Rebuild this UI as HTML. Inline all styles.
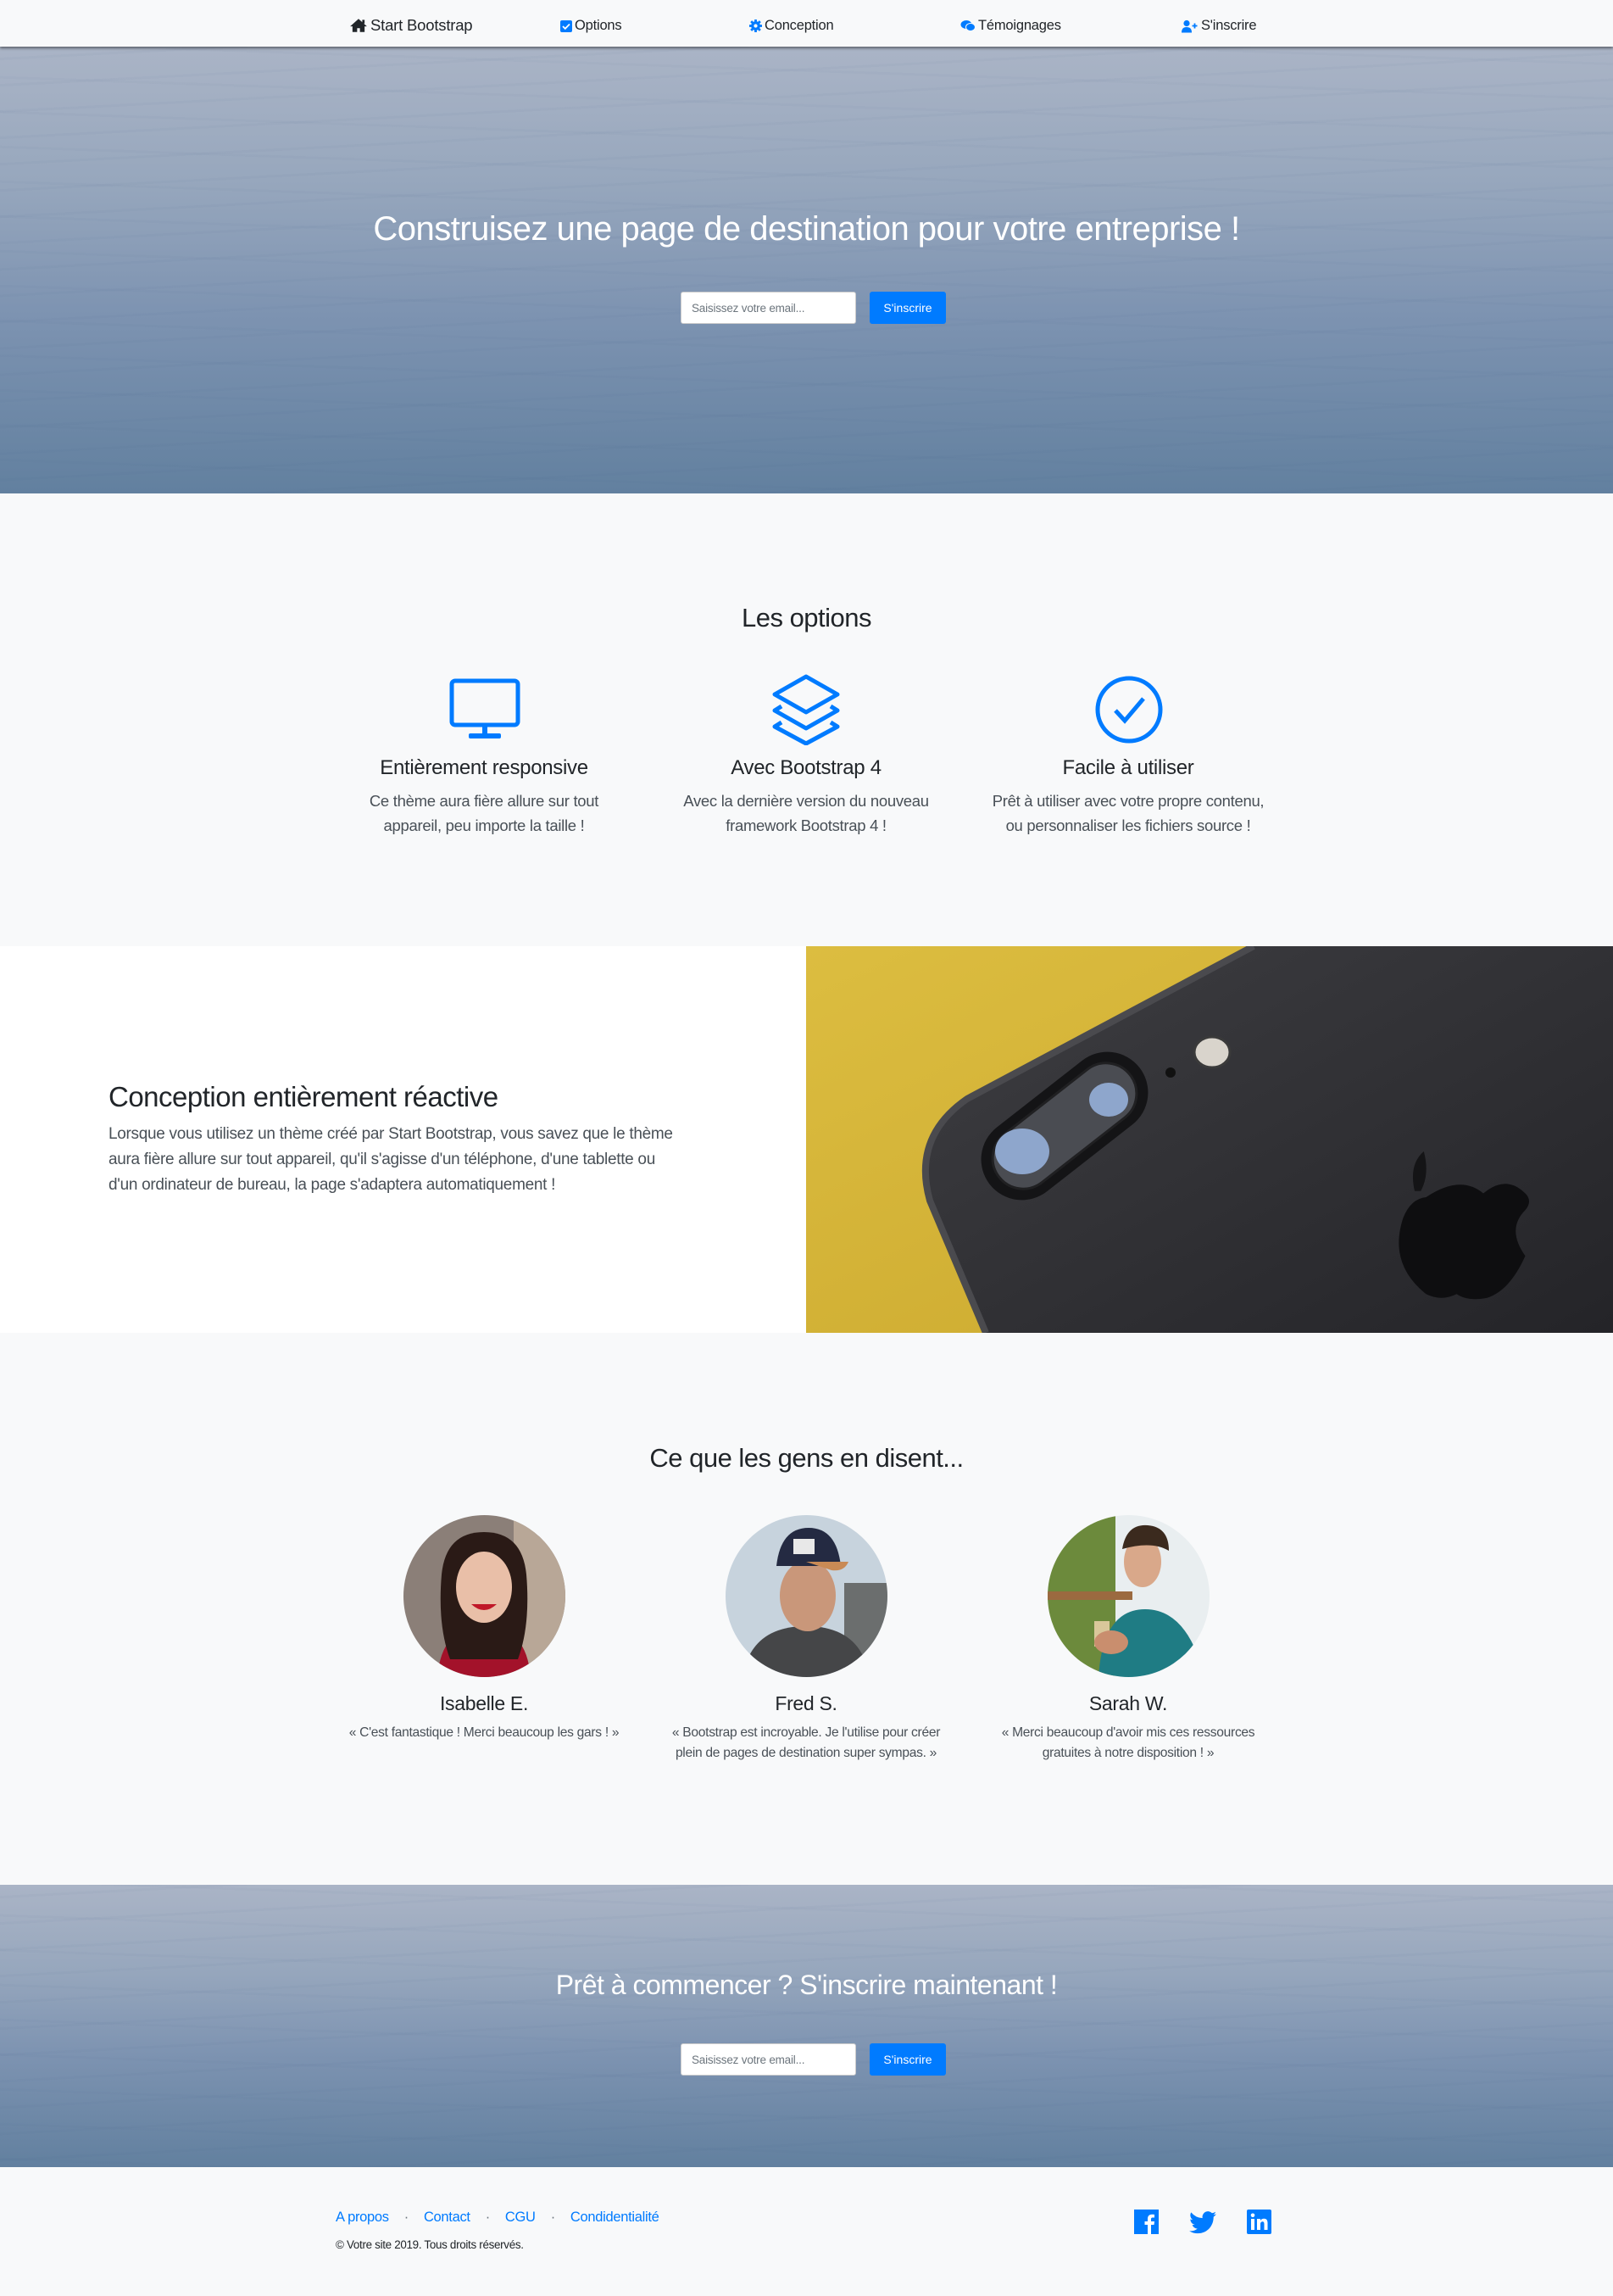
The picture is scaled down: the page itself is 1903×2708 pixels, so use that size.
<!DOCTYPE html>
<html><head><meta charset="utf-8">
<style>
*{margin:0;padding:0;box-sizing:border-box}
body{width:1903px;height:2708px;background:#f8f9fa;font-family:"Liberation Sans",sans-serif;color:#212529;position:relative;overflow:hidden}
.abs{position:absolute}
.nav{top:0;left:0;width:1903px;height:55px;background:#f8f9fa;box-shadow:0 2px 3px rgba(0,0,0,.45);z-index:5}
.nav span{position:absolute;top:21px;font-size:16.5px;color:#212529;display:flex;align-items:center;gap:3px;letter-spacing:-.2px}
.ocean{left:0;width:1903px;background:
 repeating-linear-gradient(177deg,rgba(255,255,255,0) 0 13px,rgba(50,80,125,.035) 13px 16px,rgba(255,255,255,0) 16px 31px),
 repeating-linear-gradient(182deg,rgba(255,255,255,0) 0 19px,rgba(50,80,125,.03) 19px 22px,rgba(255,255,255,0) 22px 41px),
 linear-gradient(180deg,#aab4c6 0%,#97a7bd 30%,#7d93b1 60%,#62809f 100%)}
.center{left:0;width:1903px;text-align:center}
.h1{color:#fff;font-size:40px;letter-spacing:-.5px}
.inp{background:#fff;border:1px solid #ccc;border-radius:3px;width:207px;height:38px;font-size:13.5px;color:#6c757d;padding:11px 12px;letter-spacing:-.2px}
.btn{background:#007bff;border-radius:3px;width:90px;height:38px;color:#fff;font-size:14px;text-align:center;line-height:38px}
.h2{font-size:31px;letter-spacing:-.5px}
.h3{font-size:24px;letter-spacing:-.3px}
.p{font-size:18.5px;color:#495057;line-height:29px;letter-spacing:-.3px}
.q{font-size:15.6px;color:#495057;line-height:24px;letter-spacing:-.3px}
.col{width:380px;text-align:center}
a{color:#007bff;text-decoration:none}
</style></head><body>

<div class="abs nav">
 <span style="left:412px;font-size:18.5px;top:19px"><svg width="22" height="18" viewBox="0 0 20 16"><path d="M10 1L1 9h2.5v6h5v-4h3v4h5V9H19z" fill="#212529"/><rect x="14" y="2" width="2.5" height="4" fill="#212529"/></svg>Start Bootstrap</span>
 <span style="left:661px"><svg width="14" height="14"><rect width="14" height="14" rx="2" fill="#007bff"/><path d="M3 7l2.8 2.8L11 4.5" stroke="#fff" stroke-width="1.8" fill="none"/></svg>Options</span>
 <span style="left:884px"><svg width="15" height="15" viewBox="0 0 14 14"><circle cx="7" cy="7" r="5" fill="#007bff"/><g stroke="#007bff" stroke-width="2.6"><line x1="7" y1="0" x2="7" y2="14"/><line x1="0" y1="7" x2="14" y2="7"/><line x1="2" y1="2" x2="12" y2="12"/><line x1="12" y1="2" x2="2" y2="12"/></g><circle cx="7" cy="7" r="2" fill="#f8f9fa"/></svg>Conception</span>
 <span style="left:1133px"><svg width="18" height="15" viewBox="0 0 18 14"><ellipse cx="7" cy="5.5" rx="6.5" ry="5" fill="#007bff"/><ellipse cx="12" cy="8.5" rx="5.5" ry="4.5" fill="#007bff" stroke="#f8f9fa" stroke-width="1"/></svg>Témoignages</span>
 <span style="left:1394px"><svg width="20" height="16" viewBox="0 0 20 15"><circle cx="6" cy="4" r="3.6" fill="#007bff"/><path d="M0 15c0-5 2.5-6.5 6-6.5s6 1.5 6 6.5z" fill="#007bff"/><path d="M15.5 4v6M12.5 7h6" stroke="#007bff" stroke-width="1.8"/></svg>S'inscrire</span>
</div>

<div class="abs ocean" style="top:55px;height:527px"></div>
<div class="abs center h1" style="top:248px">Construisez une page de destination pour votre entreprise !</div>
<div class="abs inp" style="left:803px;top:344px">Saisissez votre email...</div>
<div class="abs btn" style="left:1026px;top:344px">S'inscrire</div>

<div class="abs center h2" style="top:711px">Les options</div>
<svg class="abs" style="left:530px;top:800px" width="84" height="72" viewBox="0 0 84 72"><rect x="3" y="3" width="78" height="52" rx="4" fill="none" stroke="#007bff" stroke-width="5"/><rect x="39" y="55" width="6" height="11" fill="#007bff"/><rect x="23" y="65" width="38" height="6" rx="2" fill="#007bff"/></svg>
<svg class="abs" style="left:910px;top:795px" width="82" height="84" viewBox="0 0 82 84"><g fill="none" stroke="#007bff" stroke-width="5" stroke-linejoin="round"><path d="M41 3L78 24 41 45 4 24z"/><path d="M12 38L4 43l37 21 37-21-8-5"/><path d="M12 57L4 62l37 20 37-20-8-5"/></g></svg>
<svg class="abs" style="left:1291px;top:796px" width="82" height="82" viewBox="0 0 82 82"><circle cx="41" cy="41" r="37" fill="none" stroke="#007bff" stroke-width="5"/><path d="M25 42l11 12 22-26" fill="none" stroke="#007bff" stroke-width="5"/></svg>

<div class="abs col h3" style="left:381px;top:892px">Entièrement responsive</div>
<div class="abs col p" style="left:381px;top:930px">Ce thème aura fière allure sur tout<br>appareil, peu importe la taille !</div>
<div class="abs col h3" style="left:761px;top:892px">Avec Bootstrap 4</div>
<div class="abs col p" style="left:761px;top:930px">Avec la dernière version du nouveau<br>framework Bootstrap 4 !</div>
<div class="abs col h3" style="left:1121px;width:420px;top:892px">Facile à utiliser</div>
<div class="abs col p" style="left:1121px;width:420px;top:930px">Prêt à utiliser avec votre propre contenu,<br>ou personnaliser les fichiers source !</div>

<div class="abs" style="left:0;top:1116px;width:951px;height:456px;background:#fff"></div>
<div class="abs h2" style="left:128px;top:1275px;font-size:33px">Conception entièrement réactive</div>
<div class="abs p" style="left:128px;top:1323px;line-height:30px;font-size:19px">Lorsque vous utilisez un thème créé par Start Bootstrap, vous savez que le thème<br>aura fière allure sur tout appareil, qu'il s'agisse d'un téléphone, d'une tablette ou<br>d'un ordinateur de bureau, la page s'adaptera automatiquement !</div>
<svg class="abs" style="left:951px;top:1116px" width="952" height="456" viewBox="0 0 952 456">
 <defs><linearGradient id="ph" x1="0" y1="0" x2="1" y2="1"><stop offset="0" stop-color="#3e3e42"/><stop offset="1" stop-color="#242428"/></linearGradient>
 <linearGradient id="yl" x1="0" y1="0" x2="1" y2="1"><stop offset="0" stop-color="#dcbd40"/><stop offset="1" stop-color="#c9a62c"/></linearGradient></defs>
 <rect width="952" height="456" fill="url(#yl)"/>
 <path d="M528 0H952V456H212L146 300Q125 225 190 180Z" fill="url(#ph)"/>
 <path d="M528 0L190 180Q125 225 146 300L212 456" fill="none" stroke="#4a4a4e" stroke-width="8"/>
 <g transform="translate(305 212) rotate(-38)"><rect x="-112" y="-48" width="224" height="96" rx="48" fill="#141416"/><rect x="-98" y="-36" width="196" height="72" rx="36" fill="#4a4c52" stroke="#202022" stroke-width="3"/></g>
 <ellipse cx="255" cy="242" rx="32" ry="27" fill="#8ea6cc"/><ellipse cx="357" cy="181" rx="23" ry="20" fill="#8ea6cc"/>
 <circle cx="430" cy="149" r="6" fill="#111"/>
 <ellipse cx="479" cy="125" rx="21" ry="18" fill="#d9d4cc" stroke="#3a3a3a" stroke-width="3"/>
 <g transform="translate(700 260) scale(0.9) translate(-700 -260)">
 <path d="M735 300q45-30 75-5q30-25 55 0q10 10 0 22q-25 25 0 60q-20 45-50 55q-25 5-40-5q-20 10-40 0q-50-40-30-100q10-25 30-27z" fill="#0e0e10"/>
 <path d="M720 292q-8-35 12-52q8 30-4 52z" fill="#141416"/></g>
</svg>

<div class="abs center h2" style="top:1702px">Ce que les gens en disent...</div>
<svg class="abs" style="left:476px;top:1787px" width="191" height="191" viewBox="0 0 191 191"><defs><clipPath id="c1"><circle cx="95.5" cy="95.5" r="95.5"/></clipPath></defs><g clip-path="url(#c1)"><rect width="191" height="191" fill="#8b7f78"/><rect x="130" width="61" height="191" fill="#b8a797"/><path d="M40 191q5-60 55-60t55 60z" fill="#a3122a"/><path d="M45 70q5-50 50-50t50 50q5 60-10 100H55q-15-40-10-100z" fill="#2a1a16"/><ellipse cx="95" cy="85" rx="33" ry="42" fill="#e9bfa8"/><path d="M80 105q15 14 30 0z" fill="#c01828"/></g></svg>
<svg class="abs" style="left:856px;top:1787px" width="191" height="191" viewBox="0 0 191 191"><defs><clipPath id="c2"><circle cx="95.5" cy="95.5" r="95.5"/></clipPath></defs><g clip-path="url(#c2)"><rect width="191" height="191" fill="#c7d3dd"/><rect x="140" y="80" width="51" height="111" fill="#6b6e6e"/><path d="M20 191q10-60 75-60t75 60z" fill="#454648"/><ellipse cx="97" cy="95" rx="33" ry="42" fill="#c9977a"/><path d="M60 60q5-45 38-45t38 45z" fill="#242a42"/><path d="M95 55h50q-5 12-20 10z" fill="#c98a55"/><rect x="80" y="28" width="25" height="18" fill="#e8e8e8"/></g></svg>
<svg class="abs" style="left:1236px;top:1787px" width="191" height="191" viewBox="0 0 191 191"><defs><clipPath id="c3"><circle cx="95.5" cy="95.5" r="95.5"/></clipPath></defs><g clip-path="url(#c3)"><rect width="191" height="191" fill="#e9eef0"/><rect width="80" height="191" fill="#6c8a3c"/><rect x="0" y="90" width="100" height="10" fill="#9b6a40"/><path d="M60 191q5-80 55-80t70 80z" fill="#1f7c84"/><ellipse cx="112" cy="55" rx="22" ry="30" fill="#d9a88a"/><path d="M88 40q5-30 30-28t25 30q-20-12-55-2z" fill="#3b2a1e"/><rect x="55" y="125" width="18" height="30" fill="#d9c79a"/><ellipse cx="75" cy="150" rx="20" ry="14" fill="#c98e6e"/></g></svg>

<div class="abs col h3" style="left:381px;top:1996px;font-size:23px">Isabelle E.</div>
<div class="abs col q" style="left:361px;width:420px;top:2032px">« C'est fantastique ! Merci beaucoup les gars ! »</div>
<div class="abs col h3" style="left:761px;top:1996px;font-size:23px">Fred S.</div>
<div class="abs col q" style="left:741px;width:420px;top:2032px">« Bootstrap est incroyable. Je l'utilise pour créer<br>plein de pages de destination super sympas. »</div>
<div class="abs col h3" style="left:1141px;top:1996px;font-size:23px">Sarah W.</div>
<div class="abs col q" style="left:1121px;width:420px;top:2032px">« Merci beaucoup d'avoir mis ces ressources<br>gratuites à notre disposition ! »</div>

<div class="abs ocean" style="top:2223px;height:333px"></div>
<div class="abs center h1" style="top:2323px;font-size:32px;letter-spacing:-.5px">Prêt à commencer ? S'inscrire maintenant !</div>
<div class="abs inp" style="left:803px;top:2410px">Saisissez votre email...</div>
<div class="abs btn" style="left:1026px;top:2410px">S'inscrire</div>

<div class="abs" style="left:396px;top:2606px;font-size:16.5px;letter-spacing:-.3px"><a>A propos</a><span style="color:#6c757d;margin:0 18px">·</span><a>Contact</a><span style="color:#6c757d;margin:0 18px">·</span><a>CGU</a><span style="color:#6c757d;margin:0 18px">·</span><a>Condidentialité</a></div>
<div class="abs" style="left:396px;top:2640px;font-size:13.4px;color:#212529;letter-spacing:-.3px">© Votre site 2019. Tous droits réservés.</div>
<svg class="abs" style="left:1338px;top:2606px" width="29" height="29" viewBox="0 0 29 29"><rect width="29" height="29" fill="#007bff"/><path d="M20 29V18h3.5l.5-4h-4v-2.5c0-1.2.4-2 2-2h2V6c-.4 0-1.6-.2-3-.2-3 0-5 1.8-5 5.2V14h-3.5v4H16v11z" fill="#fff"/></svg>
<svg class="abs" style="left:1403px;top:2608px" width="32" height="27" viewBox="0 0 24 20"><path d="M24 2.4a10 10 0 0 1-2.8.8A5 5 0 0 0 23.3.4a10 10 0 0 1-3.1 1.2A4.9 4.9 0 0 0 11.8 6 14 14 0 0 1 1.7.9a4.9 4.9 0 0 0 1.5 6.6 5 5 0 0 1-2.2-.6 4.9 4.9 0 0 0 3.9 4.9 5 5 0 0 1-2.2.1 4.9 4.9 0 0 0 4.6 3.4A9.9 9.9 0 0 1 0 17.3 14 14 0 0 0 7.5 19.5c9.1 0 14-7.5 14-14v-.6A10 10 0 0 0 24 2.4z" fill="#007bff"/></svg>
<svg class="abs" style="left:1471px;top:2606px" width="29" height="29" viewBox="0 0 29 29"><rect width="29" height="29" rx="2" fill="#007bff"/><rect x="5" y="11" width="4" height="13" fill="#fff"/><circle cx="7" cy="6.8" r="2.3" fill="#fff"/><path d="M12 11h4v2c1-1.6 2.5-2.3 4.3-2.3 3 0 4.2 2 4.2 5V24h-4v-7c0-1.6-.5-2.8-2-2.8S16 15.4 16 17v7h-4z" fill="#fff"/></svg>
</body></html>
